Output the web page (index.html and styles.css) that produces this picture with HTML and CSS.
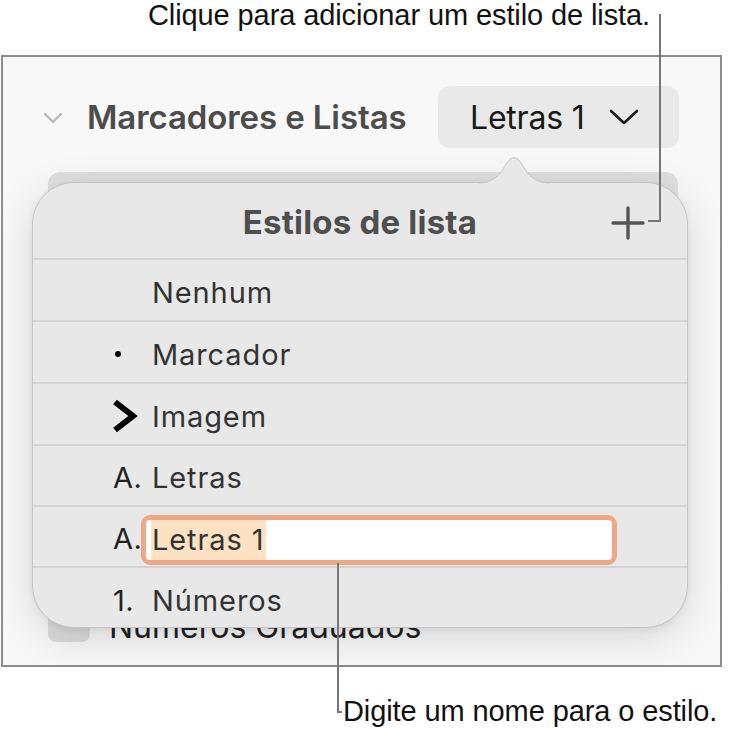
FILE: index.html
```html
<!DOCTYPE html>
<html lang="pt">
<head>
<meta charset="utf-8">
<title>Estilos de lista</title>
<link rel="stylesheet" href="styles.css">
</head>
<body>
<div class="page">
  <div class="top-callout">Clique para adicionar um estilo de lista.</div>

  <div class="panel">
    <div class="section-head">
      <svg class="disclosure" width="20" height="12" viewBox="0 0 20 12"><polyline points="2,2 10,10 18,2" fill="none" stroke="#b9b9b9" stroke-width="2.4" stroke-linecap="round" stroke-linejoin="round"/></svg>
      <span class="section-title">Marcadores e Listas</span>
      <div class="style-button">
        <span class="style-button-label">Letras 1</span>
        <svg class="style-button-chevron" width="30" height="16" viewBox="0 0 30 16"><polyline points="2,2 15,14 28,2" fill="none" stroke="#1c1c1c" stroke-width="2.6" stroke-linecap="round" stroke-linejoin="round"/></svg>
      </div>
    </div>

    <div class="underlay">
      <div class="underlay-box"></div>
      <div class="underlay-row">
        <span class="checkbox"></span>
        <span class="underlay-label">Números Graduados</span>
      </div>
    </div>

    <div class="popover">
      <svg class="popover-arrow" width="72" height="32" viewBox="0 0 72 32">
        <path d="M0,31.5 C14,31.5 22,24 28,12 Q36,-1 44,12 C50,24 58,31.5 72,31.5 Z" fill="#e8e8e8"/>
        <path d="M0,31 C14,31 22,24 28,12 Q36,-1 44,12 C50,24 58,31 72,31" fill="none" stroke="#c6c6c6" stroke-width="1"/>
      </svg>
      <div class="popover-head">
        <span class="popover-title">Estilos de lista</span>
        <svg class="add-icon" width="34" height="34" viewBox="0 0 34 34"><path d="M17,2 V32 M2,17 H32" stroke="#555555" stroke-width="3.4" stroke-linecap="round"/></svg>
      </div>
      <ul class="styles-list">
        <li class="style-row"><span class="marker"></span><span class="label">Nenhum</span></li>
        <li class="style-row"><span class="marker"><span class="bullet"></span></span><span class="label">Marcador</span></li>
        <li class="style-row"><span class="marker"><svg class="image-bullet" width="27" height="34" viewBox="0 0 27 34"><polyline points="3,3 21,17 3,31" fill="none" stroke="#000" stroke-width="6" stroke-linejoin="miter" stroke-linecap="butt"/></svg></span><span class="label">Imagem</span></li>
        <li class="style-row"><span class="marker marker-text">A.</span><span class="label">Letras</span></li>
        <li class="style-row"><span class="marker marker-text">A.</span><span class="name-field"><span class="selected-text">Letras 1</span></span></li>
        <li class="style-row"><span class="marker marker-text">1.</span><span class="label">Números</span></li>
      </ul>
    </div>
  </div>

  <div class="bottom-callout">Digite um nome para o estilo.</div>

  <div class="leader leader-top-v"></div>
  <div class="leader leader-top-h"></div>
  <div class="leader leader-bottom-v"></div>
  <div class="leader leader-bottom-h"></div>
</div>
</body>
</html>
```

FILE: styles.css
```css
* { box-sizing: border-box; }

html, body {
  margin: 0;
  padding: 0;
  background: #ffffff;
}

.page {
  position: relative;
  width: 729px;
  height: 729px;
  overflow: hidden;
  font-family: Inter, "Noto Sans", sans-serif;
}

.top-callout {
  height: 55px;
  padding: 0 0 0 148px;
  font-family: "Liberation Sans", Arial, sans-serif;
  font-size: 29px;
  line-height: 30px;
  letter-spacing: -0.1px;
  color: #111111;
  white-space: nowrap;
}

.bottom-callout {
  padding: 29px 0 0 343px;
  font-family: "Liberation Sans", Arial, sans-serif;
  font-size: 29px;
  line-height: 30px;
  letter-spacing: -0.1px;
  color: #111111;
  white-space: nowrap;
}

.panel {
  position: relative;
  margin-left: 1px;
  width: 721px;
  height: 612px;
  border: 2px solid #8d8d8d;
  background: #f8f8f8;
}

.section-head {
  display: flex;
  align-items: center;
  margin-top: 29px;
  padding: 0 41px 0 40px;
  height: 62px;
}

.disclosure {
  flex: none;
  margin-right: 24px;
  margin-top: 2px;
}

.section-title {
  font-size: 33px;
  font-weight: 600;
  color: #4c4c4c;
  letter-spacing: -0.1px;
  white-space: nowrap;
}

.style-button {
  margin-left: auto;
  flex: none;
  width: 241px;
  height: 62px;
  border-radius: 12px;
  background: #e9e9e9;
  display: flex;
  align-items: center;
  padding-left: 32px;
}

.style-button-label {
  font-size: 32px;
  color: #1a1a1a;
  letter-spacing: -0.2px;
}

.style-button-chevron {
  margin-left: 24px;
}

.underlay {
  padding-left: 45px;
}

.underlay-box {
  margin-top: 24px;
  width: 630px;
  height: 60px;
  border-radius: 12px;
  background: linear-gradient(#dedede, #e6e6e6);
}

.underlay-row {
  display: flex;
  align-items: center;
  margin-top: 378px;
  height: 32px;
}

.checkbox {
  width: 42px;
  height: 32px;
  border-radius: 8px;
  background: #dcdcdc;
}

.underlay-label {
  margin-left: 19px;
  font-size: 32px;
  color: #222222;
  white-space: nowrap;
}

.popover {
  position: absolute;
  left: 29px;
  top: 125px;
  width: 656px;
  height: 446px;
  border: 1px solid #c4c4c4;
  border-radius: 42px;
  background: #e8e8e8;
  box-shadow: 0 10px 40px rgba(0, 0, 0, 0.14), 0 2px 6px rgba(0, 0, 0, 0.06);
}

.popover-arrow {
  position: absolute;
  left: 445px;
  top: -31px;
}

.popover-head {
  position: relative;
  height: 75px;
  display: flex;
  align-items: center;
  justify-content: center;
}

.popover-title {
  font-size: 33px;
  font-weight: 700;
  color: #4e4e4e;
  padding-top: 2px;
  letter-spacing: 0.2px;
}

.add-icon {
  position: absolute;
  right: 42px;
  top: 23px;
}

.styles-list {
  list-style: none;
  margin: 0;
  padding: 0;
  border-bottom-left-radius: 42px;
  border-bottom-right-radius: 42px;
  overflow: hidden;
}

.style-row {
  display: flex;
  align-items: center;
  height: 62px;
  padding: 4px 0 0 80px;
  border-top: 2px solid #d4d4d4;
}

.style-row:nth-child(4), .style-row:nth-child(5) {
  height: 61px;
}

.marker {
  width: 39px;
  height: 34px;
  display: flex;
  align-items: center;
  flex: none;
}

.marker-text {
  font-size: 29px;
  color: #222222;
  letter-spacing: 0.4px;
}

.bullet {
  display: block;
  width: 6px;
  height: 6px;
  margin-left: 2px;
  border-radius: 50%;
  background: #000000;
}

.image-bullet {
  margin-left: -1px;
}

.label {
  font-size: 29px;
  color: #333333;
  letter-spacing: 0.9px;
}

.name-field {
  display: flex;
  align-items: center;
  margin-left: -11px;
  margin-top: 2px;
  width: 476px;
  height: 50px;
  border: 5px solid #eda886;
  border-radius: 9px;
  background: #ffffff;
  padding-left: 5px;
}

.selected-text {
  display: flex;
  align-items: center;
  height: 40px;
  padding: 0 2px 0 1px;
  background: #fde1c3;
  font-size: 29px;
  color: #333333;
  letter-spacing: 0.9px;
}

.leader {
  position: absolute;
  background: #777777;
}

.leader-top-v {
  left: 659px;
  top: 14px;
  width: 2px;
  height: 208px;
}

.leader-top-h {
  left: 648px;
  top: 220px;
  width: 12px;
  height: 2px;
}

.leader-bottom-v {
  left: 337px;
  top: 563px;
  width: 2px;
  height: 150px;
}

.leader-bottom-h {
  left: 337px;
  top: 711px;
  width: 5px;
  height: 2px;
}
```
